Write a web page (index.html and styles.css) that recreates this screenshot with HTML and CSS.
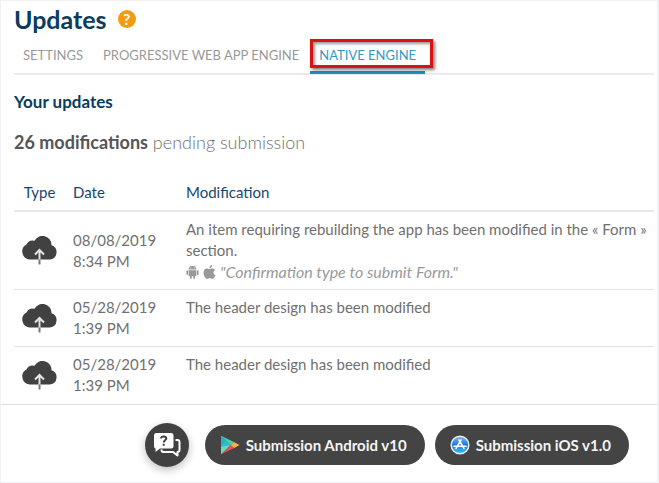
FILE: index.html
```html
<!DOCTYPE html>
<html lang="en">

<head>
    <meta charset="UTF-8">
    <meta name="viewport" content="width=device-width, initial-scale=1.0">
    <title>Updates</title>
    <link rel="stylesheet" href="styles.css">
</head>

<body>
    <!-- shared icons -->
    <svg class="sprite" aria-hidden="true">
        <symbol id="cloud" viewBox="0 0 37 29">
            <path fill="#414141" d="M8.500 23.500A8 8 0 0 1 5.500 8.500A7 7 0 0 1 13.500 4.800A9 9 0 0 1 30.500 9.300A7.300 7.300 0 0 1 29 23.500Z" />
            <path fill="none" stroke="#e4e4e4" stroke-width="2" d="M18.500 15V24M14 18.500L18.500 14L23 18.500" />
            <path fill="none" stroke="#777" stroke-width="2" d="M18.500 23.500V28.500" />
        </symbol>
    </svg>

    <div class="page">
        <main class="content">
            <header class="head">
                <h1 class="title">Updates</h1>
                <button class="help" type="button" aria-label="Help">?</button>
            </header>

            <nav class="tabs">
                <a class="tab" href="#">SETTINGS</a>
                <a class="tab" href="#">PROGRESSIVE WEB APP ENGINE</a>
                <a class="tab active" href="#">NATIVE ENGINE<span class="highlight"></span></a>
            </nav>

            <h2 class="subtitle">Your updates</h2>
            <p class="pending"><strong>26 modifications</strong> pending submission</p>

            <table class="list">
                <thead>
                    <tr>
                        <th class="type">Type</th>
                        <th class="date">Date</th>
                        <th class="text">Modification</th>
                    </tr>
                </thead>
                <tbody>
                    <tr>
                        <td class="type"><svg class="cloud"><use href="#cloud" /></svg></td>
                        <td class="date">08/08/2019<br>8:34 PM</td>
                        <td class="text">
                            An item requiring rebuilding the app has been modified in the « Form » section.
                            <div class="detail">
                                <svg class="os" viewBox="0 0 13 14">
                                    <path fill="#999" d="M2.600 4.600A3.900 3.600 0 0 1 10.400 4.600ZM2.600 5.200H10.400V10.500Q10.400 11.300 9.600 11.300H9V13Q9 13.900 8.200 13.900T7.300 13V11.300H5.700V13Q5.700 13.900 4.900 13.900T4 13V11.300H3.400Q2.600 11.300 2.600 10.500ZM.4 6Q.4 5.200 1.200 5.200T2 6V9.300Q2 10.100 1.200 10.100T.4 9.300ZM11 6Q11 5.200 11.800 5.200T12.600 6V9.300Q12.600 10.100 11.800 10.100T11 9.300Z" />
                                    <path stroke="#999" stroke-width=".6" d="M3.800 .3L4.700 1.800M9.200 .3L8.300 1.800" />
                                    <circle cx="4.800" cy="3" r=".5" fill="#fff" />
                                    <circle cx="8.200" cy="3" r=".5" fill="#fff" />
                                </svg>
                                <svg class="os" viewBox="0 0 13 14">
                                    <path fill="#999" d="M6.500 4.100C7.200 4.100 8 3.400 9.300 3.400C10.400 3.400 11.500 3.900 12.100 4.900C9.800 6.300 10.100 9.200 12.600 10.100C11.900 11.900 10.700 13.900 9.300 13.900C8.300 13.900 8 13.300 6.800 13.300S5.200 13.900 4.300 13.900C2.500 13.900 .5 10.700 .5 7.800C.5 5 2.200 3.500 4 3.500C5.100 3.500 5.900 4.100 6.500 4.100ZM6.400 3.200C6.300 1.600 7.600 .2 9.100 0C9.300 1.700 7.900 3.200 6.400 3.200Z" />
                                </svg>
                                <em>"Confirmation type to submit Form."</em>
                            </div>
                        </td>
                    </tr>
                    <tr>
                        <td class="type"><svg class="cloud"><use href="#cloud" /></svg></td>
                        <td class="date">05/28/2019<br>1:39 PM</td>
                        <td class="text top">The header design has been modified</td>
                    </tr>
                    <tr>
                        <td class="type"><svg class="cloud"><use href="#cloud" /></svg></td>
                        <td class="date">05/28/2019<br>1:39 PM</td>
                        <td class="text top">The header design has been modified</td>
                    </tr>
                </tbody>
            </table>
        </main>

        <footer class="actions">
            <button class="chat" type="button" aria-label="Support">
                <svg width="28" height="26" viewBox="0 0 28 26">
                    <path fill="#fff" d="M3 1H18Q20.500 1 20.500 3.500V14Q20.500 16.500 18 16.500H7L2.500 20V16.500Q1 16 1 14V3.500Q1 1 3 1Z" />
                    <path fill="none" stroke="#fff" stroke-width="2" stroke-linejoin="round" d="M22.500 8H24.500Q26.500 8 26.500 10V18Q26.500 20 24.500 20V23.500L20 20H10.500Q8.500 20 8.500 17.500" />
                    <path fill="none" stroke="#414141" stroke-width="2" d="M8 6.500Q8.200 4.500 10.700 4.500T13.300 6.600C13.300 8.300 10.700 8.200 10.700 10.500M10.700 11.800V13.800" />
                </svg>
            </button>
            <button class="submit" type="button">
                <svg width="20" height="20" viewBox="0 0 20 20">
                    <path fill="#35bccb" d="M1 .8V19.200L10.500 10Z" />
                    <path fill="#42d6a4" d="M1 .8L14 7L10.500 10Z" />
                    <path fill="#2dabd0" d="M1 .8L6 5.700L1 11Z" />
                    <path fill="#5ce2b5" d="M1 19.200V12L10.500 10Z" />
                    <path fill="#e5505a" d="M1 19.200L10.500 10L14.300 13Z" />
                    <path fill="#f6b04a" d="M10.500 10L14 7L19.500 10L14.300 13Z" />
                </svg>
                Submission Android v10
            </button>
            <button class="submit" type="button">
                <svg width="20" height="20" viewBox="0 0 20 20">
                    <defs>
                        <linearGradient id="blue" x1="0" y1="0" x2="0" y2="1">
                            <stop offset="0" stop-color="#8ab8ee" />
                            <stop offset=".5" stop-color="#1878dc" />
                            <stop offset="1" stop-color="#34c4f5" />
                        </linearGradient>
                    </defs>
                    <circle cx="10" cy="10" r="8.800" fill="url(#blue)" stroke="#e6edf5" stroke-width="1.500" />
                    <path fill="none" stroke="#fff" stroke-width="1.500" stroke-linecap="round" d="M4 11.300H16M11 5L6 13.500M9 5L14 13.500" />
                </svg>
                Submission iOS v1.0
            </button>
        </footer>
    </div>
</body>

</html>
```

FILE: styles.css
```css
* {
    box-sizing: border-box;
    margin: 0;
    padding: 0;
}

body {
    font-family: Lato, "Liberation Sans", sans-serif;
    font-size: 15px;
    line-height: 21px;
    color: #707070;
    background-color: #fff;
}

button {
    border: none;
    font-family: inherit;
    cursor: pointer;
}

a {
    text-decoration: none;
}

.sprite {
    position: absolute;
    width: 0;
    height: 0;
}

.page {
    min-height: 100vh;
    border: 1px solid #f0f1f3;
    border-right-width: 2px;
}

.content {
    padding: 2px 3px 1px 13px;
}

.head {
    display: flex;
    align-items: center;
    gap: 11px;
    height: 32px;
}

.title {
    font-size: 25px;
    line-height: 32px;
    color: #0b3c5d;
}

.help {
    width: 18px;
    height: 18px;
    border-radius: 50%;
    background-color: #f39c12;
    color: #fff;
    font-size: 16px;
    font-weight: bold;
    line-height: 18px;
}

/* tabs */
.tabs {
    display: flex;
    gap: 2px;
    border-bottom: 2px solid #ebebeb;
}

.tab {
    position: relative;
    padding: 10px 9px 6px;
    margin-bottom: -1px;
    border-bottom: 3px solid transparent;
    font-size: 13px;
    line-height: 20px;
    color: #999;
    white-space: nowrap;
}

.tab.active {
    border-bottom-color: #1a8fbf;
    color: #3399c4;
}

.highlight {
    position: absolute;
    top: 4px;
    right: -8px;
    bottom: 3px;
    left: 0;
    border: 3px solid #dd1111;
    box-shadow: 2px 2px 3px rgba(0, 0, 0, .5), inset 2px 2px 3px rgba(0, 0, 0, .4);
}

.subtitle {
    margin-top: 15px;
    font-size: 17px;
    line-height: 24px;
    color: #0b3c5d;
}

.pending {
    margin-top: 16px;
    font-size: 18px;
    font-weight: 300;
    line-height: 24px;
}

.pending strong {
    font-weight: bold;
    color: #555;
}

/* modifications */
.list {
    width: 100%;
    margin-top: 21px;
    border-collapse: collapse;
}

.list th,
.list td {
    padding: 7px 8px;
    text-align: left;
    vertical-align: middle;
}

.list th {
    border-bottom: 2px solid #e9e9e9;
    font-weight: normal;
    color: #174768;
}

.list td {
    border-bottom: 1px solid #e2e2e2;
}

.list tr:last-child td {
    border-bottom: none;
}

.list .type {
    width: 51px;
    padding: 7px;
    text-align: center;
}

.list .date {
    width: 113px;
}

.list .text {
    padding-right: 0;
}

.list .top {
    vertical-align: top;
}

.cloud {
    display: block;
    width: 37px;
    height: 29px;
}

.detail {
    display: flex;
    align-items: center;
    gap: 4px;
    color: #999;
    font-size: 16px;
}

.os {
    width: 13px;
    height: 14px;
}

/* bottom bar */
.actions {
    display: flex;
    justify-content: flex-end;
    align-items: center;
    gap: 10px;
    padding: 18px 28px 14px 0;
    border-top: 1px solid #dcdcdc;
}

.chat {
    display: flex;
    justify-content: center;
    align-items: center;
    width: 44px;
    height: 44px;
    margin-right: 6px;
    border-radius: 50%;
    background-color: #414141;
    box-shadow: 0 3px 8px rgba(0, 0, 0, .25);
}

.submit {
    display: flex;
    align-items: center;
    gap: 6px;
    height: 40px;
    padding: 0 18px 0 15px;
    border-radius: 20px;
    background-color: #444;
    color: #f4f4f4;
    font-size: 15px;
    font-weight: bold;
    white-space: nowrap;
}
```
